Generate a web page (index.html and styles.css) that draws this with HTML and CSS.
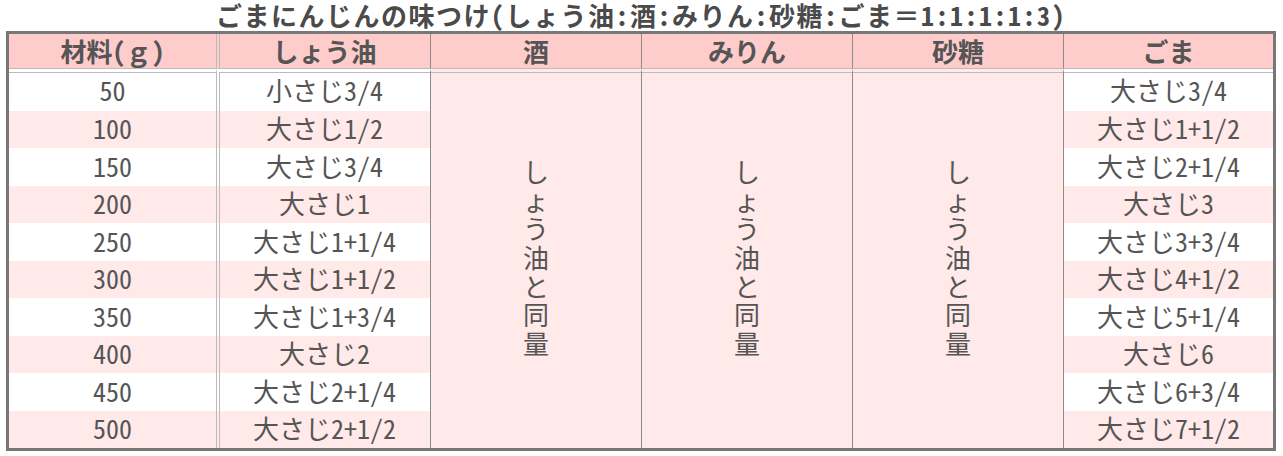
FILE: index.html
```html
<!DOCTYPE html>
<html lang="ja">
<head>
<meta charset="utf-8">
<title>ごまにんじんの味つけ</title>
<link rel="stylesheet" href="styles.css">
</head>
<body>
<div class="page">
  <h1 class="title">ごまにんじんの味つけ(しょう油:酒:みりん:砂糖:ごま<span class="fw">＝</span>1:1:1:1:3)</h1>
  <table class="recipe">
    <thead>
      <tr>
        <th class="c1">材料(<span class="fw">ｇ</span>)</th>
        <th class="c2">しょう油</th>
        <th class="c3">酒</th>
        <th class="c4">みりん</th>
        <th class="c5">砂糖</th>
        <th class="c6">ごま</th>
      </tr>
    </thead>
    <tbody>
      <tr class="odd first">
        <td class="c1">50</td>
        <td class="c2">小さじ3/4</td>
        <td class="c3 merged" rowspan="10"><span class="vert">しょう油と同量</span></td>
        <td class="c4 merged" rowspan="10"><span class="vert">しょう油と同量</span></td>
        <td class="c5 merged" rowspan="10"><span class="vert">しょう油と同量</span></td>
        <td class="c6">大さじ3/4</td>
      </tr>
      <tr class="even">
        <td class="c1">100</td>
        <td class="c2">大さじ1/2</td>
        <td class="c6">大さじ1+1/2</td>
      </tr>
      <tr class="odd">
        <td class="c1">150</td>
        <td class="c2">大さじ3/4</td>
        <td class="c6">大さじ2+1/4</td>
      </tr>
      <tr class="even">
        <td class="c1">200</td>
        <td class="c2">大さじ1</td>
        <td class="c6">大さじ3</td>
      </tr>
      <tr class="odd">
        <td class="c1">250</td>
        <td class="c2">大さじ1+1/4</td>
        <td class="c6">大さじ3+3/4</td>
      </tr>
      <tr class="even">
        <td class="c1">300</td>
        <td class="c2">大さじ1+1/2</td>
        <td class="c6">大さじ4+1/2</td>
      </tr>
      <tr class="odd">
        <td class="c1">350</td>
        <td class="c2">大さじ1+3/4</td>
        <td class="c6">大さじ5+1/4</td>
      </tr>
      <tr class="even">
        <td class="c1">400</td>
        <td class="c2">大さじ2</td>
        <td class="c6">大さじ6</td>
      </tr>
      <tr class="odd">
        <td class="c1">450</td>
        <td class="c2">大さじ2+1/4</td>
        <td class="c6">大さじ6+3/4</td>
      </tr>
      <tr class="even">
        <td class="c1">500</td>
        <td class="c2">大さじ2+1/2</td>
        <td class="c6">大さじ7+1/2</td>
      </tr>
    </tbody>
  </table>
</div>
</body>
</html>
```
FILE: styles.css
```css
html, body {
  margin: 0;
  padding: 0;
  background: #ffffff;
}

body {
  font-family: "Noto Sans CJK JP", "Noto Sans", sans-serif;
  color: #555555;
  font-feature-settings: "hwid";
}

.fw {
  font-feature-settings: normal;
}

.page {
  padding: 0 0 0 6px;
  width: 1270px;
}

.title {
  margin: 0;
  height: 31px;
  line-height: 30px;
  text-align: center;
  font-size: 26px;
  font-weight: bold;
  letter-spacing: 1.5px;
  color: #4a4a4a;
  white-space: nowrap;
}

.recipe {
  width: 1270px;
  border-collapse: separate;
  border-spacing: 0;
  border: 3px solid #777777;
  table-layout: fixed;
  font-size: 26px;
}

.recipe th,
.recipe td {
  box-sizing: border-box;
  padding: 0;
  text-align: center;
  vertical-align: middle;
  white-space: nowrap;
}

.recipe th {
  height: 35px;
  line-height: 30px;
  padding-bottom: 1px;
  background: #ffcccc;
  font-weight: bold;
  border-bottom: 1px solid #bbbbbb;
}

.recipe td {
  height: 37.5px;
  line-height: 30px;
  padding-bottom: 2px;
}

.recipe .c1 { width: 208px; border-right: 1px solid #bbbbbb; }
.recipe .c2 { width: 214px; border-left: 2px solid transparent; border-right: 1px solid #8c8c8c; box-shadow: inset 1px 0 0 #bbbbbb; }
.recipe .c3 { width: 211px; border-right: 1px solid #8c8c8c; }
.recipe .c4 { width: 211px; border-right: 1px solid #8c8c8c; }
.recipe .c5 { width: 211px; border-right: 1px solid #8c8c8c; }
.recipe .c6 { width: 209px; }

.recipe tr.odd td { background: #ffffff; }
.recipe tr.even td { background: #ffe9e9; }
.recipe tr td.merged {
  background: #ffe9e9;
  padding-bottom: 5px;
}

.recipe tr.first td {
  height: 41.5px;
  border-top: 3px solid transparent;
  box-shadow: inset 0 1px 0 #bbbbbb;
}

.recipe tr.first td.c2 {
  box-shadow: inset 1px 1px 0 #bbbbbb;
}

.vert {
  display: inline-block;
  width: 1em;
  line-height: 28.6px;
  white-space: normal;
  word-break: break-all;
  line-break: anywhere;
  text-align: center;
}
```
